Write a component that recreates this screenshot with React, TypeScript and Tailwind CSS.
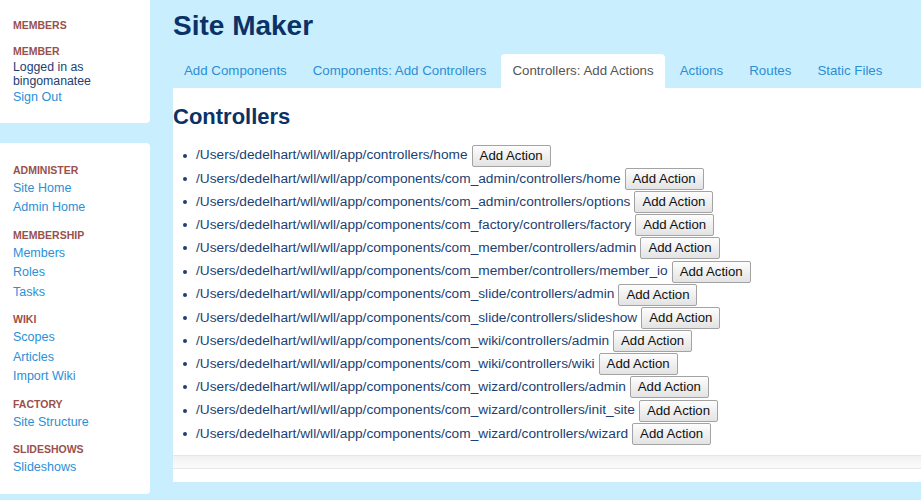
const paths = [
  "/Users/dedelhart/wll/wll/app/controllers/home",
  "/Users/dedelhart/wll/wll/app/components/com_admin/controllers/home",
  "/Users/dedelhart/wll/wll/app/components/com_admin/controllers/options",
  "/Users/dedelhart/wll/wll/app/components/com_factory/controllers/factory",
  "/Users/dedelhart/wll/wll/app/components/com_member/controllers/admin",
  "/Users/dedelhart/wll/wll/app/components/com_member/controllers/member_io",
  "/Users/dedelhart/wll/wll/app/components/com_slide/controllers/admin",
  "/Users/dedelhart/wll/wll/app/components/com_slide/controllers/slideshow",
  "/Users/dedelhart/wll/wll/app/components/com_wiki/controllers/admin",
  "/Users/dedelhart/wll/wll/app/components/com_wiki/controllers/wiki",
  "/Users/dedelhart/wll/wll/app/components/com_wizard/controllers/admin",
  "/Users/dedelhart/wll/wll/app/components/com_wizard/controllers/init_site",
  "/Users/dedelhart/wll/wll/app/components/com_wizard/controllers/wizard",
];

const tabs = [
  "Add Components",
  "Components: Add Controllers",
  "Controllers: Add Actions",
  "Actions",
  "Routes",
  "Static Files",
];

const adminMenu: { title: string; links: string[] }[] = [
  { title: "Administer", links: ["Site Home", "Admin Home"] },
  { title: "Membership", links: ["Members", "Roles", "Tasks"] },
  { title: "Wiki", links: ["Scopes", "Articles", "Import Wiki"] },
  { title: "Factory", links: ["Site Structure"] },
  { title: "Slideshows", links: ["Slideshows"] },
];

const Heading = ({ children }: { children: string }) => (
  <div className="h-[14px] text-[10.5px] leading-[14px] font-bold uppercase text-[#9a514b]">
    {children}
  </div>
);

const SideLink = ({ children }: { children: string }) => (
  <a href="#" className="block text-[12.5px] leading-[19.5px] text-[#2b8fd6]">
    {children}
  </a>
);

const Sidebar = () => (
  <aside className="flex w-[150px] shrink-0 flex-col">
    <div className="rounded-br-[4px] bg-white pt-[18px] pb-[15px] pl-[13px]">
      <Heading>Members</Heading>
      <div className="mt-[12px]">
        <Heading>Member</Heading>
        <div className="mt-[2px] text-[12.3px] leading-[14px] text-[#213f73]">
          Logged in as
          <br />
          bingomanatee
        </div>
        <SideLink>Sign Out</SideLink>
      </div>
    </div>
    <div className="mt-[20px] rounded-r-[4px] bg-white pt-[20px] pb-[16px] pl-[13px]">
      {adminMenu.map((section, i) => (
        <div key={section.title} className={i > 0 ? "mt-[10px]" : ""}>
          <div className="mb-[2px]">
            <Heading>{section.title}</Heading>
          </div>
          {section.links.map((l) => (
            <SideLink key={l}>{l}</SideLink>
          ))}
        </div>
      ))}
    </div>
  </aside>
);

export default function App() {
  return (
    <div className="flex min-h-[500px] bg-[#c9eefd] font-['Liberation_Sans',Arial,sans-serif]">
      <Sidebar />
      <main className="min-w-0 flex-1 pl-[23px]">
        <h1 className="pt-[10px] text-[28px] leading-[32px] font-bold text-[#0b3266]">
          Site Maker
        </h1>
        <nav className="mt-[12px] flex gap-[4px]">
          {tabs.map((t, i) => (
            <a
              key={t}
              href="#"
              className={
                i === 2
                  ? "h-[34px] rounded-t-[4px] bg-white px-[11px] text-[13.3px] leading-[34px] whitespace-nowrap text-[#555555]"
                  : "h-[34px] px-[11px] text-[13.3px] leading-[34px] whitespace-nowrap text-[#2b8fd6]"
              }
            >
              {t}
            </a>
          ))}
        </nav>
        <section className="bg-white">
          <h2 className="pt-[16px] text-[22px] leading-[26px] font-bold text-[#0b3266]">
            Controllers
          </h2>
          <ul className="mt-[14px] pb-[10px]">
            {paths.map((p) => (
              <li key={p} className="flex h-[23.2px] items-center whitespace-nowrap">
                <span className="ml-[10px] h-[4px] w-[4px] rounded-full bg-[#213f73]" />
                <span className="ml-[9px] text-[13.7px] text-[#213f73]">{p}</span>
                <button className="ml-[4px] h-[22px] rounded-[2px] border border-[#a3a3a3] bg-gradient-to-b from-[#fdfdfd] to-[#e3e3e3] px-[7px] text-[13.2px] leading-[20px] text-[#111111]">
                  Add Action
                </button>
              </li>
            ))}
          </ul>
          <div className="h-[14px] border-y border-[#e6e6e6] bg-gradient-to-b from-[#f1f1f1] to-[#fbfbfb]" />
          <div className="h-[13px]" />
        </section>
      </main>
    </div>
  );
}
